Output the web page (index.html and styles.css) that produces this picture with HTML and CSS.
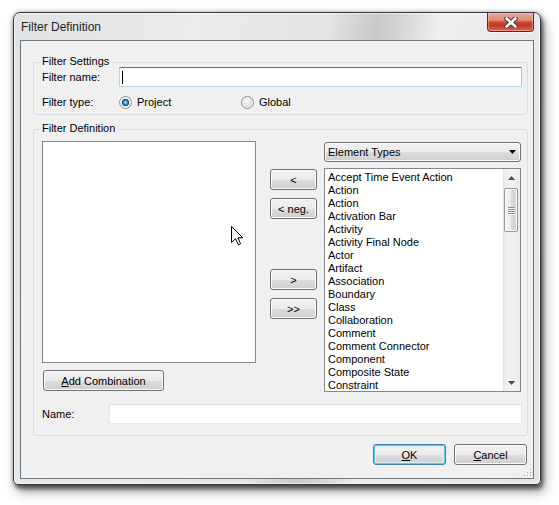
FILE: index.html
```html
<!DOCTYPE html>
<html>
<head>
<meta charset="utf-8">
<title>Filter Definition</title>
<link rel="stylesheet" href="styles.css">
</head>
<body>
<div class="window">
  <div class="titlebar">
    <span class="title">Filter Definition</span>
    <div class="close">
      <svg width="14" height="11" viewBox="0 0 14 11">
        <path d="M2.5 1.5 L11.5 9.5 M11.5 1.5 L2.5 9.5" stroke="#3b3b3b" stroke-width="4.6" stroke-linecap="round"/>
        <path d="M2.5 1.5 L11.5 9.5 M11.5 1.5 L2.5 9.5" stroke="#ffffff" stroke-width="2.6" stroke-linecap="round"/>
      </svg>
    </div>
  </div>
  <div class="client">
    <div class="group g1">
      <div class="gtitle">Filter Settings</div>
      <div class="row r1">
        <span class="lbl w77">Filter name:</span>
        <div class="textbox focus"><span class="caret"></span></div>
      </div>
      <div class="row r2">
        <span class="lbl w77">Filter type:</span>
        <span class="radio-opt opt1"><span class="radio checked"></span>Project</span>
        <span class="radio-opt"><span class="radio"></span>Global</span>
      </div>
    </div>
    <div class="group g2">
      <div class="gtitle">Filter Definition</div>
      <div class="cols">
        <div class="col-left">
          <div class="listbox left-list">
            <svg class="pointer" width="13" height="20" viewBox="0 0 13 20">
              <path d="M0.5 0.5 L0.5 16.5 L4.5 12.7 L7.3 18.8 L9.6 17.8 L6.9 11.8 L11.8 11.8 Z" fill="#ffffff" stroke="#000000" stroke-width="1" stroke-linejoin="miter"/>
            </svg>
          </div>
          <button class="btn add"><u>A</u>dd Combination</button>
        </div>
        <div class="col-mid">
          <button class="btn mid b1">&lt;</button>
          <button class="btn mid b2">&lt; neg.</button>
          <button class="btn mid b3">&gt;</button>
          <button class="btn mid b4">&gt;&gt;</button>
        </div>
        <div class="col-right">
          <div class="combo">
            <span>Element Types</span>
            <svg class="combo-arrow" width="7" height="4" viewBox="0 0 7 4"><path d="M0 0 H7 L3.5 4 Z" fill="#000"/></svg>
          </div>
          <div class="listbox right-list">
            <ul class="items">
              <li>Accept Time Event Action</li>
              <li>Action</li>
              <li>Action</li>
              <li>Activation Bar</li>
              <li>Activity</li>
              <li>Activity Final Node</li>
              <li>Actor</li>
              <li>Artifact</li>
              <li>Association</li>
              <li>Boundary</li>
              <li>Class</li>
              <li>Collaboration</li>
              <li>Comment</li>
              <li>Comment Connector</li>
              <li>Component</li>
              <li>Composite State</li>
              <li>Constraint</li>
            </ul>
            <div class="vscroll">
              <div class="sb-btn"><svg width="7" height="4" viewBox="0 0 7 4"><path d="M3.5 0 L7 4 H0 Z" fill="#4a4a4a"/></svg></div>
              <div class="thumb">
                <span class="grip-line"></span>
                <span class="grip-line"></span>
                <span class="grip-line"></span>
                <span class="grip-line"></span>
              </div>
              <div class="sb-space"></div>
              <div class="sb-btn"><svg width="7" height="4" viewBox="0 0 7 4"><path d="M0 0 H7 L3.5 4 Z" fill="#4a4a4a"/></svg></div>
            </div>
          </div>
        </div>
      </div>
      <div class="row namerow">
        <span class="lbl w67">Name:</span>
        <div class="textbox plain"></div>
      </div>
    </div>
    <div class="footer">
      <button class="btn dlg default"><u>O</u>K</button>
      <button class="btn dlg"><u>C</u>ancel</button>
    </div>
    <svg class="sizegrip" width="8" height="8" viewBox="0 0 8 8">
      <g fill="#ffffff"><rect x="7" y="1" width="1" height="1"/><rect x="4" y="4" width="1" height="1"/><rect x="7" y="4" width="1" height="1"/><rect x="1" y="7" width="1" height="1"/><rect x="4" y="7" width="1" height="1"/><rect x="7" y="7" width="1" height="1"/></g>
      <g fill="#a6a6a6"><rect x="6" y="0" width="1" height="1"/><rect x="3" y="3" width="1" height="1"/><rect x="6" y="3" width="1" height="1"/><rect x="0" y="6" width="1" height="1"/><rect x="3" y="6" width="1" height="1"/><rect x="6" y="6" width="1" height="1"/></g>
    </svg>
  </div>
</div>
</body>
</html>
```

FILE: styles.css
```css
html, body {
  margin: 0;
  padding: 0;
  background: #ffffff;
}
body {
  font-family: "Liberation Sans", Arial, sans-serif;
  font-size: 11px;
  color: #000;
  min-height: 505px;
  padding-top: 12px;
  padding-left: 13px;
  box-sizing: border-box;
}

.window {
  box-sizing: border-box;
  width: 528px;
  height: 473px;
  border: 1px solid #33373b;
  border-radius: 7px 7px 5px 5px;
  padding: 0 6px 5px;
  display: flex;
  flex-direction: column;
  background:
    linear-gradient(100deg, #e0e2e4 0%, #e9ebed 30%, #e2e4e6 52%, #c6c8ca 60%, #d4d6d8 64%, #eceef0 70%, #e3e5e7 100%);
  box-shadow: inset 0 0 0 1px rgba(255,255,255,0.6), 2px 4px 4px rgba(0,0,0,0.5), 4px 7px 12px rgba(0,0,0,0.35), 0 0 5px rgba(0,0,0,0.3);
}

.titlebar {
  height: 27px;
  display: flex;
  justify-content: space-between;
  align-items: flex-start;
}
.title {
  font-size: 12px;
  line-height: 28px;
  padding-left: 1px;
  color: #1e1e1e;
}
.close {
  box-sizing: border-box;
  width: 47px;
  height: 19px;
  border: 1px solid #5b2a22;
  border-top: none;
  border-radius: 0 0 4px 4px;
  background: linear-gradient(#e9a898 0%, #df8a78 40%, #c8432c 52%, #c23a22 70%, #d76a50 100%);
  box-shadow: inset 0 0 0 1px rgba(255,210,200,0.45), 0 1px 0 rgba(255,255,255,0.6);
  display: flex;
  align-items: center;
  justify-content: center;
}

.client {
  flex: 1;
  box-sizing: border-box;
  border: 1px solid #6f777e;
  background: #f0f0f0;
  position: relative;
  padding-top: 21px;
}

.group {
  box-sizing: border-box;
  width: 495px;
  margin-left: 12px;
  border: 1px solid #d5dfe5;
  border-radius: 3px;
  padding: 0 5px 5px 8px;
}
.gtitle {
  width: fit-content;
  height: 13px;
  line-height: 13px;
  margin: -8px 0 0 -2px;
  padding: 0 2px;
  background: #f0f0f0;
}
.g2 {
  margin-top: 14px;
  padding-bottom: 11px;
}

.row {
  display: flex;
  align-items: center;
}
.r1 {
  margin-top: -1px;
}
.r2 {
  margin-top: 8px;
  height: 14px;
}
.lbl {
  flex: none;
}
.w77 { width: 77px; }
.w67 { width: 67px; }

.textbox {
  box-sizing: border-box;
  flex: 1;
  height: 20px;
  background: #fff;
  border: 1px solid;
  display: flex;
  align-items: center;
}
.textbox.focus {
  border-color: #3d7bad #a4c9e3 #b7d9ed #b5cfe7;
}
.textbox.plain {
  border-color: #dadcdf #e3e5e8 #e6e8ea #e3e5e8;
}
.caret {
  width: 1px;
  height: 13px;
  margin-left: 2px;
  background: #000;
}

.radio-opt {
  display: flex;
  align-items: center;
  gap: 5px;
}
.opt1 {
  width: 122px;
}
.radio {
  box-sizing: border-box;
  width: 13px;
  height: 13px;
  border-radius: 50%;
  border: 1px solid #8e8f8f;
  background: radial-gradient(circle at 45% 40%, #fbfbfb 0, #ebebeb 3px, #d0d0d0 6px);
  box-shadow: inset 0 0 0 1px #f6f6f6;
}
.radio.checked {
  background: radial-gradient(circle at 50% 50%, #b8ecfd 0, #4fb3e8 1.3px, #1c6fb0 2.4px, #154d80 3.4px, #e6e6e6 3.9px, #f7f7f7 5.5px);
}

.cols {
  display: flex;
  align-items: flex-start;
  margin-top: 6px;
}
.col-left {
  width: 214px;
  display: flex;
  flex-direction: column;
}
.listbox {
  box-sizing: border-box;
  border: 1px solid #828790;
  background: #fff;
}
.left-list {
  height: 222px;
  position: relative;
}
.pointer {
  position: absolute;
  left: 188px;
  top: 84px;
}
.col-mid {
  width: 47px;
  margin-left: 14px;
  display: flex;
  flex-direction: column;
}
.col-right {
  width: 197px;
  margin-left: 7px;
}

.btn {
  box-sizing: border-box;
  font-family: "Liberation Sans", Arial, sans-serif;
  font-size: 11px;
  color: #000;
  height: 21px;
  padding: 0;
  border: 1px solid #707070;
  border-radius: 3px;
  background: linear-gradient(#f2f2f2 0%, #ebebeb 50%, #dddddd 51%, #cfcfcf 100%);
  box-shadow: inset 0 0 0 1px #fbfbfb;
  text-align: center;
}
.add {
  width: 121px;
  margin: 7px 0 0 1px;
}
.mid {
  width: 47px;
}
.b1 { margin-top: 28px; }
.b2 { margin-top: 8px; }
.b3 { margin-top: 50px; }
.b4 { margin-top: 8px; }

.combo {
  box-sizing: border-box;
  margin-top: 1px;
  height: 20px;
  border: 1px solid #707070;
  border-radius: 3px;
  background: linear-gradient(#f2f2f2 0%, #ebebeb 50%, #dddddd 51%, #cfcfcf 100%);
  box-shadow: inset 0 0 0 1px #fbfbfb;
  display: flex;
  align-items: center;
  justify-content: space-between;
  padding: 0 4px 0 3px;
}
.combo-arrow {
  display: block;
}
.right-list {
  margin-top: 6px;
  height: 224px;
  display: flex;
}
.items {
  flex: 1;
  margin: 0;
  padding: 2px 0 0 3px;
  list-style: none;
  line-height: 13px;
  white-space: nowrap;
  overflow: hidden;
}
.vscroll {
  width: 17px;
  display: flex;
  flex-direction: column;
  background: linear-gradient(90deg, #e2e2e2 0%, #eeeeee 15%, #f2f2f2 60%, #ebebeb 100%);
}
.sb-btn {
  height: 17px;
  flex: none;
  display: flex;
  align-items: center;
  justify-content: center;
}
.sb-btn svg {
  display: block;
}
.thumb {
  box-sizing: border-box;
  flex: none;
  height: 44px;
  margin: 2px 2px 0 1px;
  border: 1px solid #979797;
  border-radius: 2px;
  background: linear-gradient(90deg, #f4f4f4 0%, #ebebeb 45%, #d9d9d9 55%, #d2d2d2 100%);
  box-shadow: inset 0 0 0 1px #fbfbfb;
  display: flex;
  flex-direction: column;
  align-items: center;
  justify-content: center;
  gap: 1px;
}
.grip-line {
  display: block;
  width: 7px;
  height: 1px;
  background: #8a8a8a;
  box-shadow: 0 1px 0 #fafafa;
}
.sb-space {
  flex: 1;
}

.namerow {
  margin-top: 12px;
}

.footer {
  display: flex;
  justify-content: flex-end;
  gap: 8px;
  margin-top: 8px;
  padding-right: 6px;
}
.dlg {
  width: 73px;
}
.default {
  border-color: #3c7fb1;
  box-shadow: inset 0 0 0 1px #5fc6f2, inset 0 0 0 2px #d8f0fb;
}

.sizegrip {
  position: absolute;
  right: 1px;
  bottom: 1px;
}
```
